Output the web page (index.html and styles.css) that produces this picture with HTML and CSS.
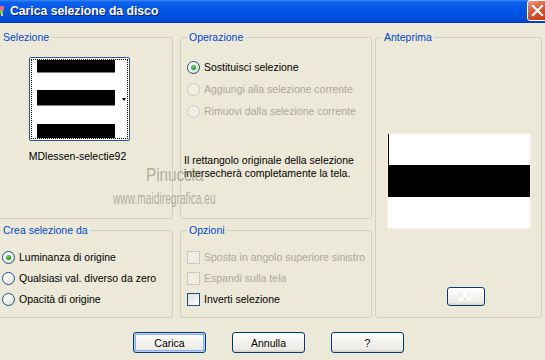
FILE: index.html
```html
<!DOCTYPE html>
<html lang="it">
<head>
  <meta charset="UTF-8" />
  <title>Carica selezione da disco</title>
  <link rel="stylesheet" href="styles.css">
</head>
<body>
  <div class="window">
    <div class="titlebar">
      <svg class="app-icon" width="5" height="14" viewBox="0 0 5 14">
        <rect x="0" y="2" width="4" height="4" fill="#e86a8c" />
        <rect x="0" y="6" width="3" height="4" fill="#7cc25a" />
        <rect x="1" y="10" width="2" height="2" fill="#f1d36b" />
      </svg>
      <span class="title">Carica selezione da disco</span>
      <span class="close">
        <svg width="19" height="19" viewBox="0 0 19 19">
          <path d="M5 5 L14 14 M14 5 L5 14" stroke="#fff" stroke-width="2.2" stroke-linecap="square" />
        </svg>
      </span>
    </div>

    <div class="content">
      <div class="col col-left">
        <fieldset class="group group-tall">
          <legend>Selezione</legend>
          <div class="thumb-wrap">
            <div class="thumb">
              <div class="thumb-focus">
                <div class="thumb-img"></div>
                <span class="thumb-arrow"></span>
              </div>
            </div>
            <div class="thumb-name">MDlessen-selectie92</div>
          </div>
        </fieldset>
        <fieldset class="group group-short">
          <legend>Crea selezione da</legend>
          <div class="opts opts-short">
            <label class="opt"><span class="radio checked"></span>Luminanza di origine</label>
            <label class="opt"><span class="radio"></span>Qualsiasi val. diverso da zero</label>
            <label class="opt"><span class="radio"></span>Opacità di origine</label>
          </div>
        </fieldset>
      </div>

      <div class="col col-mid">
        <fieldset class="group group-tall">
          <legend>Operazione</legend>
          <div class="opts opts-tall">
            <label class="opt"><span class="radio checked"></span>Sostituisci selezione</label>
            <label class="opt disabled"><span class="radio"></span>Aggiungi alla selezione corrente</label>
            <label class="opt disabled"><span class="radio"></span>Rimuovi dalla selezione corrente</label>
          </div>
          <p class="note">Il rettangolo originale della selezione<br>intersecherà completamente la tela.</p>
        </fieldset>
        <fieldset class="group group-short">
          <legend>Opzioni</legend>
          <div class="opts opts-short">
            <label class="opt disabled"><span class="check"></span>Sposta in angolo superiore sinistro</label>
            <label class="opt disabled"><span class="check"></span>Espandi sulla tela</label>
            <label class="opt"><span class="check"></span>Inverti selezione</label>
          </div>
        </fieldset>
      </div>

      <fieldset class="group group-preview">
        <legend>Anteprima</legend>
        <div class="preview"></div>
        <button class="btn btn-small"><span class="btn-small-icon"></span></button>
      </fieldset>
    </div>

    <div class="actions">
      <button class="btn btn-default">Carica</button>
      <button class="btn">Annulla</button>
      <button class="btn">?</button>
    </div>

    <div class="watermark">
      <span class="wm-name">Pinuccia</span>
      <span class="wm-site">www.maidiregrafica.eu</span>
    </div>
  </div>
</body>
</html>
```

FILE: styles.css
```css
body {
  margin: 0;
  background: #ece9d8;
  font-family: 'Liberation Sans', Arial, sans-serif;
  font-size: 10.5px;
  line-height: 13px;
  color: #000;
}

.window {
  position: relative;
  width: 545px;
  height: 360px;
  overflow: hidden;
}

/* title bar */
.titlebar {
  height: 23px;
  display: flex;
  align-items: center;
  overflow: hidden;
  background: linear-gradient(180deg, #3a8cf8 0, #0b61ee 2px, #0558e7 8px, #0054e3 14px, #004fdc 18px, #0044c8 22px, #003bb0 23px);
}

.app-icon {
  flex: none;
  margin-top: -1px;
}

.title {
  margin-left: 5px;
  color: #fff;
  font-size: 12.2px;
  font-weight: bold;
  text-shadow: 1px 1px #0f1f89;
}

.close {
  margin-left: auto;
  margin-right: -3px;
  width: 19px;
  height: 19px;
  border: 1px solid #fff;
  border-radius: 3px;
  background: linear-gradient(160deg, #f09a7e 0, #e2643f 35%, #cf4a23 70%, #b8391a 100%);
  display: flex;
  align-items: center;
  justify-content: center;
  margin-top: -2px;
}

/* groups */
.content {
  display: flex;
  margin: 8px 0 0 -8px;
}

.col {
  display: flex;
  flex-direction: column;
  gap: 5px;
}

.col-left {
  width: 181px;
}

.col-mid {
  width: 192px;
  margin-left: 7px;
}

.group {
  margin: 0;
  padding: 0 6px;
  min-width: 0;
  box-sizing: border-box;
  border: 1px solid #d0d0bf;
  border-radius: 3px;
}

.col-left .group {
  padding-left: 9px;
}

.group legend {
  color: #0046d5;
  padding: 0 2px;
  margin-left: 0;
  line-height: 13px;
}

.col-left .group legend {
  margin-left: -1px;
}

.group-tall {
  height: 188px;
}

.group-short {
  height: 94px;
}

.group-preview {
  width: 167px;
  height: 287px;
  margin-left: 3px;
}

/* selection thumbnail */
.thumb-wrap {
  width: 101px;
  margin: 13px 0 0 27px;
  text-align: center;
}

.thumb {
  width: 101px;
  height: 84px;
  box-sizing: border-box;
  border: 1px solid #32518a;
  border-radius: 2px;
  background: #fff;
  padding: 1px;
}

.thumb-focus {
  height: 100%;
  box-sizing: border-box;
  border: 1px dotted #000;
  display: flex;
  align-items: center;
}

.thumb-img {
  width: 78px;
  height: 78px;
  margin-left: 5px;
  background: linear-gradient(180deg, #000 0 12px, #808080 12px 13px, #fff 13px 30px, #000 30px 45px, #808080 45px 46px, #fff 46px 64px, #000 64px);
}

.thumb-arrow {
  margin-left: auto;
  margin-right: 1px;
  width: 0;
  height: 0;
  border-left: 2.5px solid transparent;
  border-right: 2.5px solid transparent;
  border-top: 3px solid #000;
}

.thumb-name {
  margin-top: 9px;
  margin-left: -4px;
  white-space: nowrap;
}

/* radios and checkboxes */
.opts-tall {
  padding-top: 12px;
}

.opts-tall .opt {
  height: 22px;
}

.opts-short {
  padding-top: 10px;
}

.opt {
  display: flex;
  align-items: center;
  gap: 4px;
  height: 21px;
  white-space: nowrap;
}

.opt.disabled {
  color: #aca899;
}

.radio {
  flex: none;
  width: 13px;
  height: 13px;
  box-sizing: border-box;
  border: 1px solid #1c5180;
  border-radius: 50%;
  background: linear-gradient(135deg, #fff 20%, #dcdbd3 100%);
  display: flex;
  align-items: center;
  justify-content: center;
}

.radio.checked::after {
  content: '';
  width: 5px;
  height: 5px;
  border-radius: 50%;
  background: radial-gradient(circle at 40% 35%, #6fd86f, #21a121 60%, #1a8a1a);
}

.check {
  flex: none;
  width: 13px;
  height: 13px;
  box-sizing: border-box;
  border: 1px solid #1c5180;
  background: linear-gradient(135deg, #dcdcd7 0%, #fff 100%);
}

.disabled .radio,
.disabled .check {
  border-color: #cac8bb;
  background: #efede4;
}

.note {
  margin: 32px 0 0 -3px;
  white-space: nowrap;
}

/* preview */
.preview {
  width: 142px;
  height: 94px;
  margin: 90px auto 0;
  box-shadow: 0 0 0 1px #f4f2e8;
  background:
    linear-gradient(90deg, #000 1px, transparent 1px) 0 0 / 100% 31px no-repeat,
    linear-gradient(180deg, #fff 0 31px, #000 31px 63px, #fff 63px);
}

/* buttons */
.btn {
  width: 73px;
  height: 21px;
  padding: 0;
  border: 1px solid #003c74;
  border-radius: 3px;
  background: linear-gradient(180deg, #fff 0, #f6f5f1 40%, #ecebe6 85%, #d6d0c5 100%);
  font-family: inherit;
  font-size: 10.5px;
  color: #000;
}

.btn-default {
  box-shadow: inset 0 0 0 1px #b9d1f6, inset 0 0 0 2px #8eaee8;
}

.btn-small {
  display: block;
  width: 38px;
  height: 19px;
  margin: 59px 0 0 65px;
}

.btn-small-icon {
  display: block;
  width: 14px;
  height: 8px;
  margin: 0 auto;
  background: repeating-conic-gradient(#ffffff 0 25%, #f1f0eb 0 50%) 0 0 / 8px 8px;
}

.actions {
  display: flex;
  gap: 26px;
  margin-top: 14px;
  padding-left: 133px;
}

/* watermark over the dialog */
.watermark {
  position: absolute;
  left: 113px;
  top: 165px;
  color: rgba(140, 138, 125, 0.65);
  pointer-events: none;
}

.wm-name,
.wm-site {
  display: block;
  transform-origin: left top;
  white-space: nowrap;
}

.wm-name {
  margin-left: 33px;
  font-size: 19px;
  line-height: 20px;
  transform: scaleX(0.8);
}

.wm-site {
  margin-top: 5px;
  font-size: 17px;
  line-height: 18px;
  transform: scaleX(0.6);
}
```
